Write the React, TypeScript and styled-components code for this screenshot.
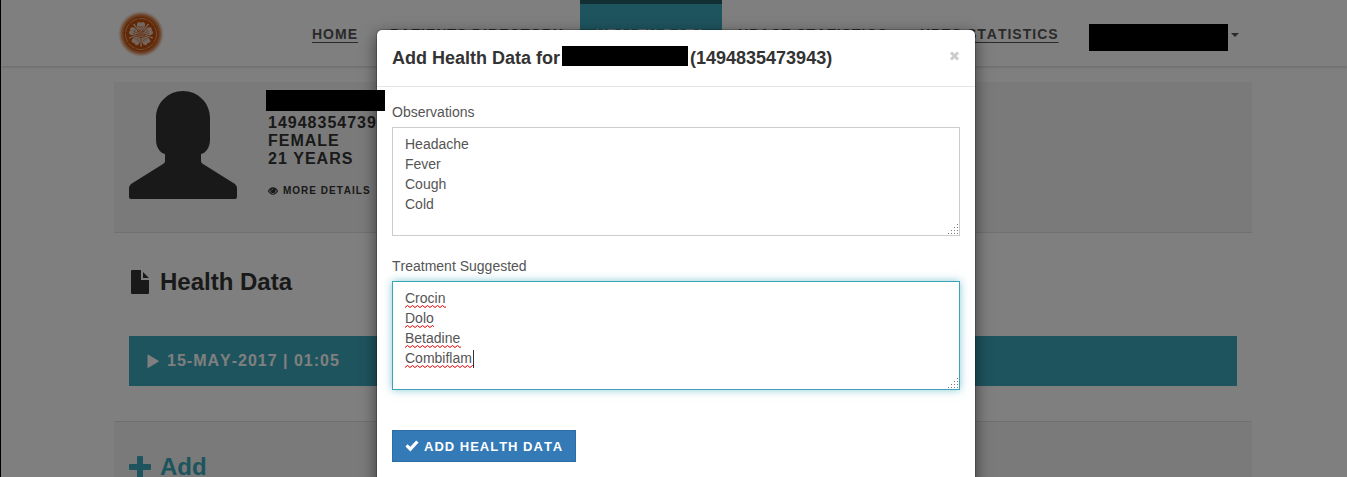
import React from "react";
import styled, { createGlobalStyle } from "styled-components";

const GlobalStyle = createGlobalStyle`
  *, *::before, *::after { box-sizing: border-box; font-kerning: none; }
  body {
    margin: 0;
    background: #fff;
    color: #333;
    font: 14px/20px "Liberation Sans", Arial, sans-serif;
  }
  h1, h2, h3, p, ul { margin: 0; padding: 0; }
  ul { list-style: none; }
  button { font-family: inherit; }
`;

const Page = styled.div`
  position: relative;
  height: 100vh;
  overflow: hidden;
  border-left: 1px solid #000;
`;

const Header = styled.header`
  display: flex;
  height: 66px;
  padding: 0 95px 0 117px;
  background: #fff;
  box-shadow: 0 1px 3px rgba(0, 0, 0, 0.2);
`;

const LogoLink = styled.a`
  flex: none;
  width: 46px;
  padding-top: 11px;
`;

const Nav = styled.ul`
  display: flex;
  flex: 1;
  padding-left: 132px;
`;

const NavItem = styled.li`
  flex: none;
`;

const NavLink = styled.a<{ $active?: boolean }>`
  display: flex;
  align-items: center;
  height: 66px;
  padding: 0 16px 2px;
  border-top: 4px solid ${(p) => (p.$active ? "#245f66" : "transparent")};
  background: ${(p) => (p.$active ? "#3ca8bc" : "transparent")};
  background-clip: padding-box;
  color: ${(p) => (p.$active ? "#fff" : "#555")};
  font-size: 14px;
  font-weight: bold;
  letter-spacing: 1px;
  text-underline-offset: 3px;
  white-space: nowrap;
`;

const AccountLink = styled(NavLink)`
  padding: 4px 16px 0 14px;
`;

const Redaction = styled.span<{ $w: number; $h: number }>`
  display: inline-block;
  flex: none;
  width: ${(p) => p.$w}px;
  height: ${(p) => p.$h}px;
  background: #000;
`;

const Caret = styled.span`
  margin: 0 0 4px 3px;
  border: 4px solid transparent;
  border-top-color: #555;
  border-bottom: 0;
`;

const Main = styled.main`
  padding: 16px 95px 0 113px;
`;

const PatientPanel = styled.section`
  display: flex;
  gap: 29px;
  height: 151px;
  padding: 9px 15px;
  background: #f4f4f4;
  border-bottom: 1px solid #e0e0e0;
`;

const PatientInfo = styled.div`
  padding-left: 2px;
  font-size: 16px;
  font-weight: bold;
  line-height: 18px;
  letter-spacing: 1px;
`;

const PatientName = styled.div`
  position: relative;
  z-index: 3;
  height: 24px;
  margin: -1px 0 0 -2px;
  line-height: 0;
`;

const DetailsLink = styled.a`
  display: flex;
  align-items: center;
  gap: 5px;
  margin-top: 14px;
  color: inherit;
  font-size: 10px;
  text-decoration: none;
`;

const RecordsSection = styled.section`
  height: 189px;
  padding: 32px 15px 0;
  border-bottom: 1px solid #e0e0e0;
`;

const SectionTitle = styled.h2<{ $accent?: boolean }>`
  display: flex;
  align-items: center;
  gap: 9px;
  color: ${(p) => (p.$accent ? "#3ca8bc" : "#333")};
  font-size: 24px;
  line-height: 34px;
`;

const RecordToggle = styled.button`
  display: flex;
  align-items: center;
  gap: 8px;
  width: 100%;
  height: 50px;
  margin-top: 37px;
  padding: 0 18px;
  border: 0;
  background: #3ca8bc;
  color: #fff;
  font-size: 16px;
  font-weight: bold;
  letter-spacing: 1px;
`;

const AddSection = styled.section`
  min-height: 120px;
  padding: 28px 15px;
  background: #f4f4f4;
`;

const Backdrop = styled.div`
  position: absolute;
  inset: 0;
  z-index: 1;
  background: rgba(0, 0, 0, 0.5);
`;

const ModalLayer = styled.div`
  position: absolute;
  inset: 0;
  z-index: 2;
  display: flex;
  justify-content: center;
  align-items: flex-start;
  padding: 29px 0 0 4px;
  overflow: hidden;
`;

const Modal = styled.div`
  width: 100%;
  max-width: 600px;
  border: 1px solid rgba(0, 0, 0, 0.2);
  border-radius: 6px;
  background: #fff;
  background-clip: padding-box;
  box-shadow: 0 5px 15px rgba(0, 0, 0, 0.5);
`;

const ModalHeader = styled.div`
  display: flex;
  align-items: center;
  justify-content: space-between;
  height: 57px;
  padding: 0 15px;
  border-bottom: 1px solid #e5e5e5;
`;

const ModalTitle = styled.h1`
  display: flex;
  align-items: flex-start;
  gap: 2px;
  font-size: 18px;
  line-height: 24px;
  white-space: nowrap;
`;

const CloseButton = styled.button`
  display: flex;
  padding: 0 0 4px;
  border: 0;
  background: none;
`;

const Form = styled.form`
  padding: 15px 15px 30px;
`;

const Field = styled.div`
  margin-bottom: 20px;
`;

const Label = styled.label`
  display: block;
  margin-bottom: 5px;
  color: #555;
`;

const TextBox = styled.div`
  position: relative;
`;

const TextArea = styled.textarea<{ $focused?: boolean }>`
  display: block;
  width: 100%;
  height: 109px;
  padding: 6px 12px;
  border: 1px solid ${(p) => (p.$focused ? "#3ca4b4" : "#ccc")};
  border-radius: 0;
  outline: 0;
  resize: none;
  color: #555;
  font: 14px/20px "Liberation Sans", Arial, sans-serif;
  box-shadow: ${(p) => (p.$focused ? "0 0 8px rgba(60, 168, 188, 0.6)" : "none")};
`;

const Grip = styled.svg`
  position: absolute;
  right: 2px;
  bottom: 2px;
`;

const SpellMarks = styled.div`
  position: absolute;
  top: 7px;
  left: 13px;
  pointer-events: none;
`;

const SpellRow = styled.div`
  display: flex;
  align-items: flex-end;
  height: 20px;
`;

const TextCursor = styled.span`
  width: 1px;
  height: 18px;
  background: #333;
`;

const SubmitButton = styled.button`
  display: flex;
  align-items: center;
  gap: 5px;
  height: 32px;
  margin-top: 40px;
  padding: 0 12px;
  border: 1px solid #2e6da4;
  background: #337ab7;
  color: #fff;
  font-size: 13px;
  font-weight: bold;
  letter-spacing: 1px;
`;

const Logo = () => (
  <svg width="46" height="46" viewBox="-23 -23 46 46" role="img" aria-label="Logo">
    <defs>
      <radialGradient id="glow">
        <stop offset="0.72" stopColor="#c4500a" />
        <stop offset="0.84" stopColor="#cf6a2a" stopOpacity="0.75" />
        <stop offset="1" stopColor="#e8a880" stopOpacity="0" />
      </radialGradient>
    </defs>
    <circle r="23" fill="url(#glow)" />
    <circle r="15.5" fill="none" stroke="#e0b49a" strokeWidth="0.8" strokeDasharray="9 1" />
    {[0, 72, 144, 216, 288].map((angle) => (
      <g key={angle} transform={`rotate(${angle})`}>
        <path
          d="M0-3C-3-5-5-8-3.600-11C-2.500-12.500-1-12 0-11C1-12 2.500-12.500 3.600-11C5-8 3-5 0-3Z"
          fill="#e6cdbd"
        />
        <path d="M0-4V-8M-1.500-6L-2-8M1.500-6L2-8" stroke="#c9662a" strokeWidth="0.700" />
        <path d="M0 4V12" stroke="#e6cdbd" strokeWidth="1.200" />
        <circle cy="11.500" r="0.900" fill="#e6cdbd" />
      </g>
    ))}
    <circle r="3" fill="#d98c5c" stroke="#e6cdbd" strokeWidth="0.800" strokeDasharray="1 1" />
  </svg>
);

const Avatar = () => (
  <svg width="108" height="108" viewBox="0 0 108 108" aria-hidden="true">
    <path
      fill="#333"
      d="M54 0C69 0 81 12 81 27V49C81 56 77 62 72 63V70Q72 72 74 73L106 93Q108 95 108 97V106Q108 108 106 108H2Q0 108 0 106V97Q0 95 2 93L34 73Q36 72 36 70V63C31 62 27 56 27 49V27C27 12 39 0 54 0Z"
    />
  </svg>
);

const EyeIcon = () => (
  <svg width="10" height="8" viewBox="0 0 10 8" aria-hidden="true">
    <path d="M0.500 4C3-0.300 7-0.300 9.500 4C7 8.300 3 8.300 0.500 4Z" fill="#f4f4f4" stroke="#333" strokeWidth="1.2" />
    <circle cx="5" cy="3.500" r="2.600" fill="#333" />
    <path d="M3.700 3.200Q4 2.200 5 2.200" fill="none" stroke="#f4f4f4" strokeWidth="0.700" />
  </svg>
);

const FileIcon = () => (
  <svg width="22" height="24" viewBox="0 0 22 24" aria-hidden="true">
    <path fill="#333" d="M3 0H12V10H20V23Q20 24 19 24H3Q2 24 2 23V1Q2 0 3 0ZM14 2L20 8H14Z" />
  </svg>
);

const PlusIcon = () => (
  <svg width="22" height="22" viewBox="0 0 22 22" aria-hidden="true">
    <path
      fill="#3ca8bc"
      d="M9 0H13Q14 0 14 1V8H21Q22 8 22 9V13Q22 14 21 14H14V21Q14 22 13 22H9Q8 22 8 21V14H1Q0 14 0 13V9Q0 8 1 8H8V1Q8 0 9 0Z"
    />
  </svg>
);

const PlayIcon = () => (
  <svg width="12" height="15" viewBox="0 0 12 15" aria-hidden="true">
    <path fill="#fff" d="M1 0.500L11.500 6.700Q12 7.200 11.500 7.700L1 14Q0.500 14.200 0.500 13.500V1Q0.500 0.300 1 0.500Z" />
  </svg>
);

const CheckIcon = () => (
  <svg width="14" height="12" viewBox="0 0 14 12" aria-hidden="true">
    <path fill="#fff" d="M0.500 6.500L2.500 4.300L5.300 6.700L11.200 0.500L13.600 2.600L5.400 11.600Z" />
  </svg>
);

const CloseIcon = () => (
  <svg width="11" height="10" viewBox="0 0 11 10" aria-hidden="true">
    <path d="M2 1.500L9 8.500M9 1.500L2 8.500" stroke="#ccc" strokeWidth="3" />
  </svg>
);

const ResizeGrip = () => (
  <Grip width="10" height="10" viewBox="0 0 10 10" aria-hidden="true">
    <path
      fill="#777"
      d="M9 0h1v1h-1zM6 3h1v1h-1zM9 3h1v1h-1zM3 6h1v1h-1zM6 6h1v1h-1zM9 6h1v1h-1zM0 9h1v1h-1zM3 9h1v1h-1zM6 9h1v1h-1zM9 9h1v1h-1z"
    />
  </Grip>
);

const Squiggle = ({ width }: { width: number }) => {
  let d = "M0 2.500";
  for (let x = 0; x < width; x += 5) d += `l2.500-2l2.500 2`;
  return (
    <svg width={width} height="3" viewBox={`0 0 ${width} 3`} aria-hidden="true">
      <path d={d} fill="none" stroke="#e00000" strokeWidth="1" />
    </svg>
  );
};

const observations = ["Headache", "Fever", "Cough", "Cold"];
const treatments = ["Crocin", "Dolo", "Betadine", "Combiflam"];
const markWidths = [41, 29, 56, 68];

export default function App() {
  return (
    <>
      <GlobalStyle />
      <Page>
        <Header>
          <LogoLink href="#">
            <Logo />
          </LogoLink>
          <Nav>
            <NavItem><NavLink href="#">HOME</NavLink></NavItem>
            <NavItem><NavLink href="#">PATIENTS DIRECTORY</NavLink></NavItem>
            <NavItem><NavLink href="#" $active>HEALTH DATA</NavLink></NavItem>
            <NavItem><NavLink href="#">HPACT STATISTICS</NavLink></NavItem>
            <NavItem><NavLink href="#">HPES STATISTICS</NavLink></NavItem>
            <NavItem>
              <AccountLink href="#" aria-label="Account">
                <Redaction $w={139} $h={27} />
                <Caret />
              </AccountLink>
            </NavItem>
          </Nav>
        </Header>
        <Main>
          <PatientPanel>
            <Avatar />
            <PatientInfo>
              <PatientName><Redaction $w={119} $h={21} /></PatientName>
              <p>1494835473943</p>
              <p>FEMALE</p>
              <p>21 YEARS</p>
              <DetailsLink href="#"><EyeIcon />MORE DETAILS</DetailsLink>
            </PatientInfo>
          </PatientPanel>
          <RecordsSection>
            <SectionTitle><FileIcon />Health Data</SectionTitle>
            <RecordToggle type="button"><PlayIcon />15-MAY-2017 | 01:05</RecordToggle>
          </RecordsSection>
          <AddSection>
            <SectionTitle $accent><PlusIcon />Add</SectionTitle>
          </AddSection>
        </Main>
        <Backdrop />
        <ModalLayer>
          <Modal role="dialog" aria-labelledby="dialog-title">
            <ModalHeader>
              <ModalTitle id="dialog-title">
                Add Health Data for
                <Redaction $w={126} $h={20} />
                (1494835473943)
              </ModalTitle>
              <CloseButton type="button" aria-label="Close"><CloseIcon /></CloseButton>
            </ModalHeader>
            <Form onSubmit={(e) => e.preventDefault()}>
              <Field>
                <Label htmlFor="observations">Observations</Label>
                <TextBox>
                  <TextArea id="observations" spellCheck={false} defaultValue={observations.join("\n")} />
                  <ResizeGrip />
                </TextBox>
              </Field>
              <Field>
                <Label htmlFor="treatment">Treatment Suggested</Label>
                <TextBox>
                  <TextArea id="treatment" $focused spellCheck={false} defaultValue={treatments.join("\n")} />
                  <SpellMarks>
                    {markWidths.map((width, i) => (
                      <SpellRow key={width}>
                        <Squiggle width={width} />
                        {i === markWidths.length - 1 && <TextCursor />}
                      </SpellRow>
                    ))}
                  </SpellMarks>
                  <ResizeGrip />
                </TextBox>
              </Field>
              <SubmitButton type="submit"><CheckIcon />ADD HEALTH DATA</SubmitButton>
            </Form>
          </Modal>
        </ModalLayer>
      </Page>
    </>
  );
}
